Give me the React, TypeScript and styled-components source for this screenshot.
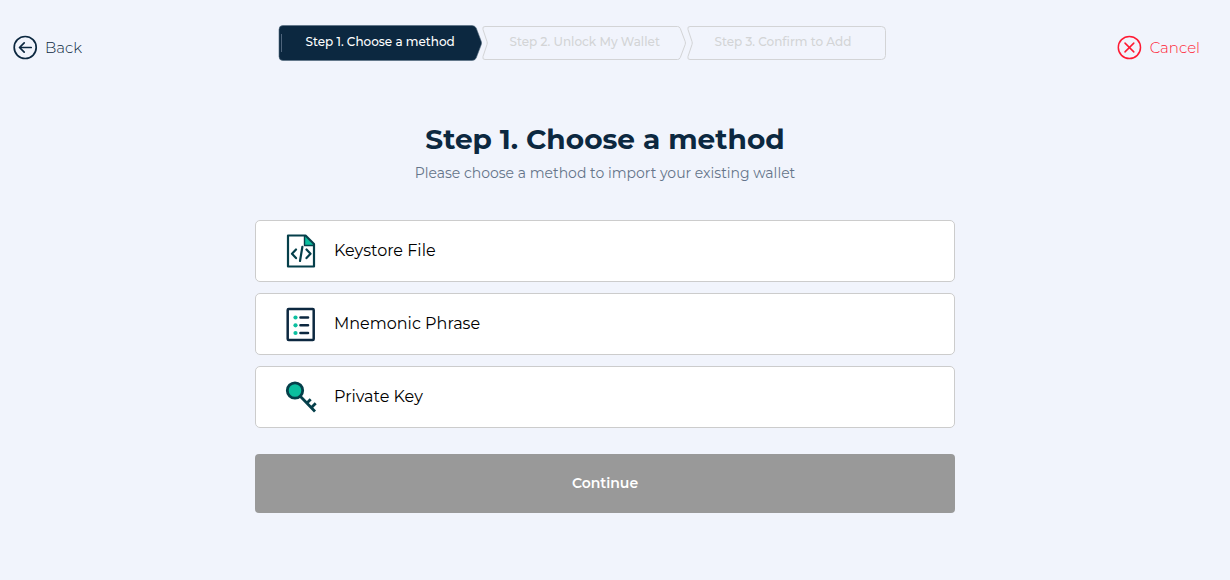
import React, { useState } from "react";
import styled, { createGlobalStyle } from "styled-components";

const navy = "#0c2840";
const teal = "#0bbf9f";
const pine = "#053f4a";
const red = "#ff1a33";

const GlobalStyle = createGlobalStyle`
  *, *::before, *::after { box-sizing: border-box; }
  body {
    margin: 0;
    background: #f1f4fc;
    color: #000;
    font-family: Montserrat, Inter, "Liberation Sans", sans-serif;
    -webkit-font-smoothing: antialiased;
  }
  svg { display: block; flex: none; }
`;

const Page = styled.div`
  padding: 25px 20px 64px 0;
`;

const Header = styled.header`
  display: grid;
  grid-template-columns: 1fr auto 1fr;
  align-items: start;
  padding: 0 10px 0 12px;
`;

const NavLink = styled.a<{ $danger?: boolean }>`
  display: flex;
  align-items: center;
  gap: 7px;
  height: 26px;
  margin-top: 10px;
  justify-self: ${(p) => (p.$danger ? "end" : "start")};
  color: ${(p) => (p.$danger ? red : navy)};
  font-size: 15px;
  font-weight: 300;
  text-decoration: none;
`;

const NavLabel = styled.span`
  line-height: 20px;
`;

const Steps = styled.ol`
  display: flex;
  margin: 0;
  padding: 0 48px 0 0;
  list-style: none;
`;

const Step = styled.li<{ $active?: boolean }>`
  display: grid;
  font-size: 12px;
  font-weight: 500;
  line-height: 34px;
  color: ${(p) => (p.$active ? "#fff" : "#d3d4d6")};

  & > * {
    grid-area: 1 / 1;
  }
`;

const StepLabel = styled.span`
  padding-left: 28px;
  white-space: nowrap;
`;

const Main = styled.main`
  max-width: 700px;
  margin: 60px auto 0;
  text-align: center;
`;

const Title = styled.h1`
  margin: 0;
  color: ${navy};
  font-size: 28px;
  font-weight: 700;
  line-height: 36px;
`;

const Subtitle = styled.p`
  margin: 6px 0 37px;
  color: #65748a;
  font-size: 14px;
  font-weight: 400;
  line-height: 20px;
`;

const Methods = styled.div`
  display: flex;
  flex-direction: column;
  gap: 11px;
`;

const Method = styled.button`
  display: flex;
  align-items: center;
  gap: 15px;
  height: 62px;
  padding: 0 28px;
  border: 1px solid #ccc;
  border-radius: 5px;
  background: #fff;
  color: #000;
  font: inherit;
  font-size: 16px;
  cursor: pointer;

  &[aria-pressed="true"] {
    border-color: ${teal};
  }
`;

const MethodLabel = styled.span`
  line-height: 20px;
`;

const Continue = styled.button`
  width: 100%;
  height: 59px;
  margin-top: 26px;
  padding: 0 0 2px;
  border: 0;
  border-radius: 4px;
  background: ${navy};
  color: #fff;
  font: inherit;
  font-size: 14px;
  font-weight: 600;

  &:disabled {
    background: #999;
  }
`;

const BackIcon = () => (
  <svg width="26" height="26" viewBox="0 0 26 26" fill="none" stroke={navy} strokeWidth="1.7" strokeLinecap="round" strokeLinejoin="round" aria-hidden="true">
    <circle cx="13.200" cy="12.500" r="11" />
    <path d="M19.200 12.500H7.800M12.200 7.800L7.500 12.500L12.200 17.200" />
  </svg>
);

const CancelIcon = () => (
  <svg width="26" height="26" viewBox="0 0 26 26" fill="none" stroke={red} strokeWidth="1.5" strokeLinecap="round" aria-hidden="true">
    <circle cx="12.400" cy="12.500" r="11.1" />
    <path d="M8 8.100L16.800 16.900M16.800 8.100L8 16.900" />
  </svg>
);

const FirstStepShape = () => (
  <svg width="204" height="36" viewBox="0 0 204 36" aria-hidden="true">
    <path d="M5 .5H194Q197 .5 198.200 3L203.300 16.500Q203.900 18 203.300 19.500L198.200 33Q197 35.500 194 35.500H5Q1 35.500 1 31.500V4.500Q1 .5 5 .5Z" fill={navy} stroke="#52697d" strokeWidth=".6" />
    <path d="M3.500 9V27" stroke="#60748a" strokeWidth=".8" />
  </svg>
);

const MiddleStepShape = () => (
  <svg width="205" height="36" viewBox="0 0 205 36" fill="none" stroke="#d3d4d6" aria-hidden="true">
    <path d="M3 1.500H195.500Q197.500 1.500 198.300 3.500L203.200 16.500Q203.700 18 203.200 19.500L198.300 32.500Q197.500 34.500 195.500 34.500H3Q0 34.500 1 31.500L5 19.500Q5.500 18 5 16.500L1 4.500Q0 1.500 3 1.500Z" />
  </svg>
);

const LastStepShape = () => (
  <svg width="200" height="36" viewBox="0 0 200 36" fill="none" stroke="#d3d4d6" aria-hidden="true">
    <path d="M3 1.500H194.500Q198.500 1.500 198.500 5.500V30.500Q198.500 34.500 194.500 34.500H3Q0 34.500 1 31.500L5 19.500Q5.500 18 5 16.500L1 4.500Q0 1.500 3 1.500Z" />
  </svg>
);

const FileIcon = () => (
  <svg width="35" height="36" viewBox="0 0 35 36" fill="none" stroke={pine} strokeWidth="2.200" strokeLinejoin="round" strokeLinecap="round" aria-hidden="true">
    <path d="M20.500 2.500V12.500H30.500Z" fill={teal} stroke="none" />
    <path d="M4 2.500H21.500L30 11V33.500H4Z" />
    <path d="M20.500 3V12.500H30" strokeWidth="1.400" />
    <path d="M12 16.500L8 20.800L12 25.100M22.500 16.500L26.500 20.800L22.500 25.100M18.400 13.800L16 28" />
  </svg>
);

const ListIcon = () => (
  <svg width="35" height="36" viewBox="0 0 35 36" fill="none" aria-hidden="true">
    <rect x="3.700" y="3" width="26" height="31" rx="1" stroke={navy} strokeWidth="2.500" />
    <path d="M16.500 11.500H24M16.500 19.300H24M16.500 27H24" stroke={navy} strokeWidth="2.600" strokeLinecap="round" />
    <g fill={teal}>
      <circle cx="11.500" cy="11.500" r="2.100" />
      <circle cx="11.500" cy="19.300" r="2.100" />
      <circle cx="11.500" cy="27" r="2.100" />
    </g>
  </svg>
);

const KeyIcon = () => (
  <svg width="35" height="36" viewBox="0 0 35 36" fill="none" stroke={pine} strokeWidth="2.800" aria-hidden="true">
    <path d="M16 17L31 32.500M22.500 24.500L26.700 20.300M27 29L31.700 24.300" />
    <circle cx="11" cy="11.500" r="7.700" fill={teal} />
  </svg>
);

const methods = [
  { name: "Keystore File", Icon: FileIcon },
  { name: "Mnemonic Phrase", Icon: ListIcon },
  { name: "Private Key", Icon: KeyIcon },
];

export default function App() {
  const [selected, setSelected] = useState<string | null>(null);

  return (
    <>
      <GlobalStyle />
      <Page>
        <Header>
          <NavLink href="#back">
            <BackIcon />
            <NavLabel>Back</NavLabel>
          </NavLink>
          <Steps>
            <Step $active aria-current="step">
              <FirstStepShape />
              <StepLabel>Step 1. Choose a method</StepLabel>
            </Step>
            <Step>
              <MiddleStepShape />
              <StepLabel>Step 2. Unlock My Wallet</StepLabel>
            </Step>
            <Step>
              <LastStepShape />
              <StepLabel>Step 3. Confirm to Add</StepLabel>
            </Step>
          </Steps>
          <NavLink href="#cancel" $danger>
            <CancelIcon />
            <NavLabel>Cancel</NavLabel>
          </NavLink>
        </Header>
        <Main>
          <Title>Step 1. Choose a method</Title>
          <Subtitle>Please choose a method to import your existing wallet</Subtitle>
          <Methods>
            {methods.map(({ name, Icon }) => (
              <Method key={name} type="button" aria-pressed={selected === name} onClick={() => setSelected(name)}>
                <Icon />
                <MethodLabel>{name}</MethodLabel>
              </Method>
            ))}
          </Methods>
          <Continue type="button" disabled={selected === null}>
            Continue
          </Continue>
        </Main>
      </Page>
    </>
  );
}
